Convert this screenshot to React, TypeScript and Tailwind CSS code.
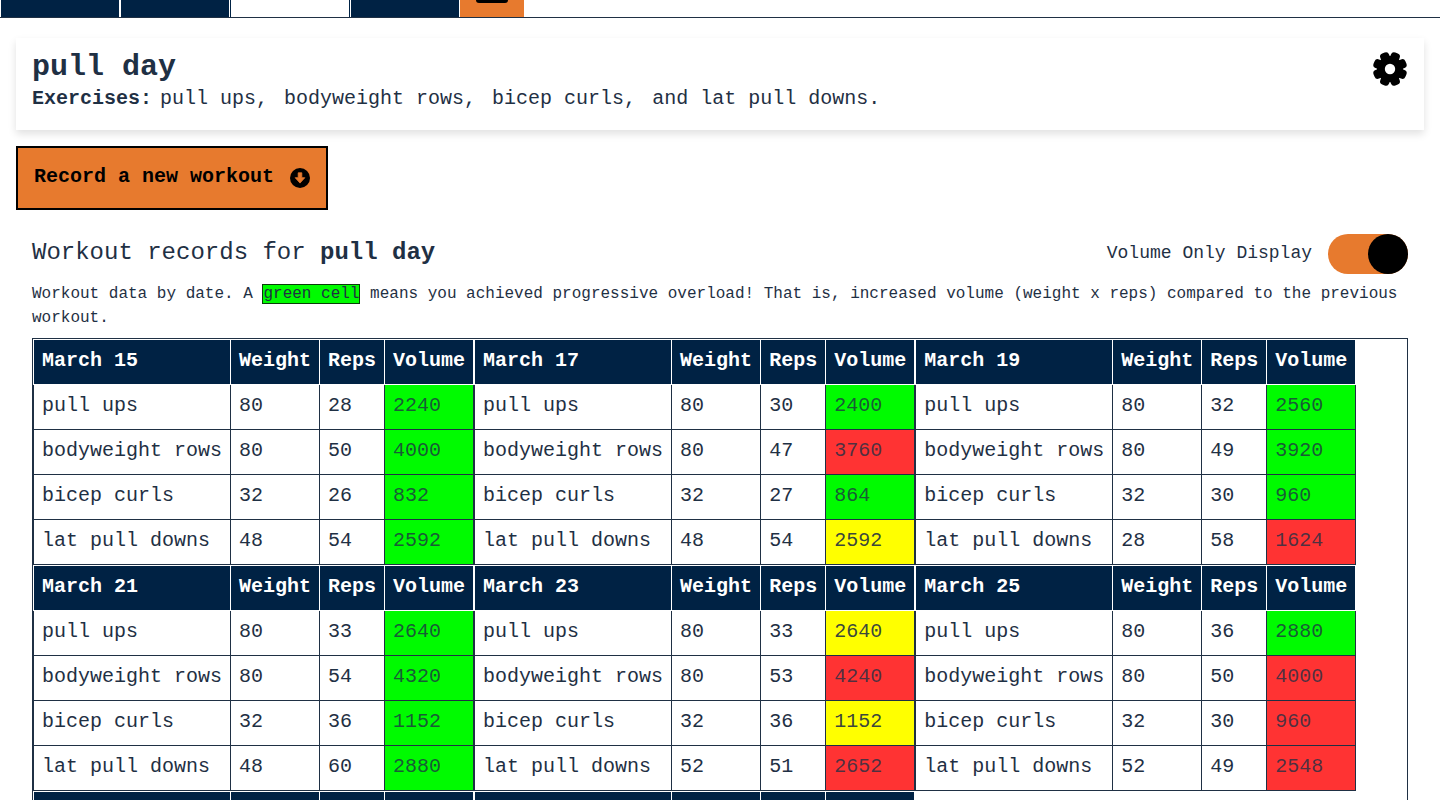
import React from 'react';

type Row = [string, number, number, number, 'g' | 'y' | 'r'];

interface Workout {
  date: string;
  rows: Row[];
}

const workouts: Workout[] = [
  { date: 'March 15', rows: [['pull ups', 80, 28, 2240, 'g'], ['bodyweight rows', 80, 50, 4000, 'g'], ['bicep curls', 32, 26, 832, 'g'], ['lat pull downs', 48, 54, 2592, 'g']] },
  { date: 'March 17', rows: [['pull ups', 80, 30, 2400, 'g'], ['bodyweight rows', 80, 47, 3760, 'r'], ['bicep curls', 32, 27, 864, 'g'], ['lat pull downs', 48, 54, 2592, 'y']] },
  { date: 'March 19', rows: [['pull ups', 80, 32, 2560, 'g'], ['bodyweight rows', 80, 49, 3920, 'g'], ['bicep curls', 32, 30, 960, 'g'], ['lat pull downs', 28, 58, 1624, 'r']] },
  { date: 'March 21', rows: [['pull ups', 80, 33, 2640, 'g'], ['bodyweight rows', 80, 54, 4320, 'g'], ['bicep curls', 32, 36, 1152, 'g'], ['lat pull downs', 48, 60, 2880, 'g']] },
  { date: 'March 23', rows: [['pull ups', 80, 33, 2640, 'y'], ['bodyweight rows', 80, 53, 4240, 'r'], ['bicep curls', 32, 36, 1152, 'y'], ['lat pull downs', 52, 51, 2652, 'r']] },
  { date: 'March 25', rows: [['pull ups', 80, 36, 2880, 'g'], ['bodyweight rows', 80, 50, 4000, 'r'], ['bicep curls', 32, 30, 960, 'r'], ['lat pull downs', 52, 49, 2548, 'r']] },
  { date: 'March 27', rows: [['pull ups', 80, 36, 2880, 'y'], ['bodyweight rows', 80, 52, 4160, 'g'], ['bicep curls', 32, 32, 1024, 'g'], ['lat pull downs', 52, 50, 2600, 'g']] },
  { date: 'March 29', rows: [['pull ups', 80, 38, 3040, 'g'], ['bodyweight rows', 80, 52, 4160, 'y'], ['bicep curls', 32, 34, 1088, 'g'], ['lat pull downs', 52, 51, 2652, 'g']] },
];

const volumeColor = {
  g: 'bg-[#00fb00] text-[#1f3044]/80',
  y: 'bg-[#ffff00] text-[#1f3044]/90',
  r: 'bg-[#ff3333] text-[#1f3044]/80',
};

// eight rounded lobes, small hole
const GearIcon = () => (
  <svg viewBox="0 0 36 36" className="h-9 w-9 shrink-0">
    <circle cx="18" cy="18" r="13" fill="#000" />
    {[22.5, 67.5, 112.5, 157.5].map((deg) => (
      <rect key={deg} x="13.3" y="0.8" width="9.4" height="34.4" rx="3.4" fill="#000" transform={`rotate(${deg} 18 18)`} />
    ))}
    <circle cx="18" cy="18" r="5.2" fill="#fff" />
  </svg>
);

const ArrowCircleIcon = () => (
  <svg viewBox="0 0 20 20" className="h-5 w-5 shrink-0">
    <circle cx="10" cy="10" r="10" fill="#000" />
    <path d="M8.2 4.8h3.6v4.9h3l-4.8 5.4-4.8-5.4h3z" fill="#e77a2e" stroke="#e77a2e" strokeWidth="0.8" strokeLinejoin="round" />
  </svg>
);

const WorkoutTable: React.FC<{ workout: Workout }> = ({ workout }) => (
  <table className="border-collapse self-start text-[20px] leading-[28px]">
    <thead>
      <tr className="h-[45px] bg-[#002244] text-white">
        <th className="border border-white px-2 pb-[2px] text-left font-bold">{workout.date}</th>
        <th className="border border-white px-2 pb-[2px] text-left font-bold">Weight</th>
        <th className="border border-white px-2 pb-[2px] text-left font-bold">Reps</th>
        <th className="border border-white px-2 pb-[2px] text-left font-bold">Volume</th>
      </tr>
    </thead>
    <tbody>
      {workout.rows.map((row) => (
        <tr key={row[0]} className="h-[45px]">
          <td className="border border-[#1f3044] px-2 pb-[2px]">{row[0]}</td>
          <td className="border border-[#1f3044] px-2 pb-[2px]">{row[1]}</td>
          <td className="border border-[#1f3044] px-2 pb-[2px]">{row[2]}</td>
          <td className={`border border-[#1f3044] px-2 pb-[2px] ${volumeColor[row[4]]}`}>{row[3]}</td>
        </tr>
      ))}
    </tbody>
  </table>
);

export default function App() {
  return (
    <div className="h-[800px] overflow-hidden bg-white font-['Liberation_Mono',monospace] text-[#1f3044]">
      <nav className="flex h-[18px] items-stretch gap-px border-b border-[#1f3044] pl-px">
        <div className="w-[118px] bg-[#002244]" />
        <div className="ml-px w-[108px] bg-[#002244]" />
        <div className="w-[120px] border-x border-[#002244] bg-white" />
        <div className="w-[108px] bg-[#002244]" />
        <div className="flex w-[64px] justify-center bg-[#e77a2e]">
          <div className="h-[3px] w-[32px] rounded-b-[3px] bg-black" />
        </div>
      </nav>

      <div className="flex flex-col px-4">
        <section className="mt-[20px] flex h-[92px] justify-between bg-white px-4 pt-[14px] shadow-[0_4px_8px_rgba(0,0,0,0.12)]">
          <div>
            <h1 className="text-[30px] font-bold leading-[30px]">pull day</h1>
            <p className="mt-[5px] flex gap-4 text-[20px] leading-[24px]">
              <b className="-mr-2">Exercises:</b>
              <span>pull ups,</span>
              <span>bodyweight rows,</span>
              <span>bicep curls,</span>
              <span>and lat pull downs.</span>
            </p>
          </div>
          <div className="-mt-px">
            <GearIcon />
          </div>
        </section>

        <button className="mt-4 flex h-16 w-[312px] items-center gap-4 whitespace-nowrap border-2 border-black bg-[#e77a2e] px-4 text-[20px] font-bold text-black">
          <span className="-mt-[3px]">Record a new workout</span>
          <ArrowCircleIcon />
        </button>

        <div className="px-4">
          <div className="mt-6 flex h-10 items-center justify-between">
            <h2 className="-mt-[2px] text-[24px] leading-[32px]">
              Workout records for <b>pull day</b>
            </h2>
            <div className="flex items-center gap-4">
              <span className="-mt-[2px] text-[18px]">Volume Only Display</span>
              <div className="flex h-10 w-20 justify-end rounded-full bg-[#e77a2e]">
                <div className="h-10 w-10 rounded-full bg-black" />
              </div>
            </div>
          </div>

          <p className="mt-2 text-[16px] leading-[24px]">
            Workout data by date. A{' '}
            <span className="border border-[#0a3d0a] bg-[#00fb00]">green cell</span> means you achieved progressive
            overload! That is, increased volume (weight x reps) compared to the previous workout.
          </p>

          <div className="mt-2 flex flex-wrap content-start border border-[#1f3044]">
            {workouts.map((w) => (
              <WorkoutTable key={w.date} workout={w} />
            ))}
          </div>
        </div>
      </div>
    </div>
  );
}
